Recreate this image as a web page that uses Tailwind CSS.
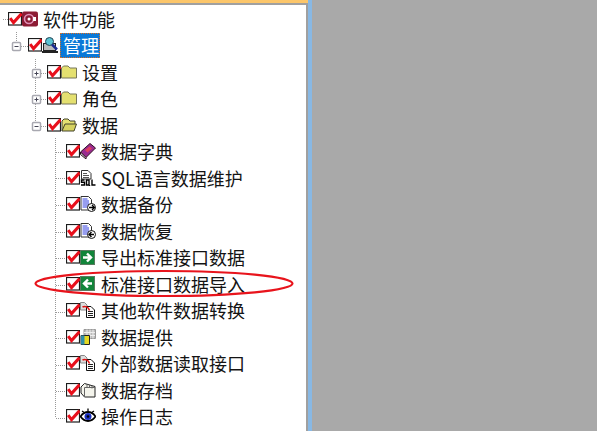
<!DOCTYPE html>
<html lang="zh">
<head>
  <meta charset="UTF-8" />
  <title>软件功能</title>
  <script src="https://cdn.jsdelivr.net/npm/@tailwindcss/browser@4"></script>
</head>
<body class="w-[601px] h-[431px] overflow-hidden bg-[#a9a9a9]">
  <svg class="hidden">
    <symbol id="chk" viewBox="0 0 14 14">
      <rect x="0.5" y="0.5" width="13" height="12.5" fill="#fff" stroke="#1c1c1c" stroke-width="1.2"/>
      <path d="M2.2 6.2 L5.5 10.6 L13.6 1.6" fill="none" stroke="#e8101c" stroke-width="3"/>
    </symbol>
    <symbol id="folder" viewBox="0 0 16 14">
      <path d="M0.5 13V3L2.5 1H7L9 3H15.5V13z" fill="#e4e070" stroke="#77775a"/>
    </symbol>
    <symbol id="doc-arrow" viewBox="0 0 16 16">
      <path d="M1 0.5h7.500l3 3V14H1z" fill="#fff" stroke="#333"/>
      <path d="M2.500 3h5M2.500 5h6.500M2.500 7h6.500M2.500 9h6.500M2.500 11h5" stroke="#2f3ce0"/>
      <circle cx="11.500" cy="11.500" r="4" fill="#fff" stroke="#111"/>
    </symbol>
    <symbol id="doc-red" viewBox="0 0 16 16">
      <path d="M0.500 0.500h4l2.500 2.500v5H0.500z" fill="#ddd" stroke="#888"/>
      <path d="M6.500 4.500h4.500l3.500 3.500v7.500h-8z" fill="#fff" stroke="#111"/>
      <path d="M8 9.500h5M8 11.500h5M8 13.500h5" stroke="#222"/>
      <path d="M2.500 5c2.500-1.500 6 0 7 3.500" fill="none" stroke="#e01010" stroke-width="1.500"/>
    </symbol>
  </svg>

  <div class="relative w-full h-full flex" style="font-family:'Noto Sans CJK SC','Liberation Sans',sans-serif">
    <div class="w-[312px] h-full shrink-0 flex flex-col border-r-4 border-[#88b8e4]">
      <div class="h-[3px] bg-[#fcc66a] shrink-0"></div>
      <div class="flex-1 bg-white border-t-2 border-r-2 border-[#a0a0a0] pt-[0.5px] text-[18px] leading-[26.5px] text-[#141414]">

        <div class="h-[26.5px] flex items-center pl-[8px]">
          <svg class="w-[14px] h-[14px]"><use href="#chk"/></svg>
          <svg class="w-[16px] h-[16px]" viewBox="0 0 16 16"><rect x="0" y="0.5" width="16" height="15" rx="2" fill="#8c1c34"/><circle cx="7" cy="8" r="4.500" fill="none" stroke="#e090b8" stroke-width="1.600"/><circle cx="7" cy="8" r="1.500" fill="#fff"/><rect x="11" y="6" width="3" height="4" fill="#fff"/></svg>
          <span class="ml-[5px]">软件功能</span>
        </div>

        <div class="h-[26.5px] flex items-center pl-[28px]">
          <svg class="w-[14px] h-[14px]"><use href="#chk"/></svg>
          <svg class="w-[16px] h-[16px]" viewBox="0 0 16 16"><rect x="1.500" y="6.500" width="12" height="7" fill="#bbb" stroke="#222"/><path d="M0 15h16" stroke="#222" stroke-width="2"/><circle cx="7.500" cy="4.500" r="4" fill="#5cc4d4" stroke="#245"/><path d="M10 7.500l5 5" stroke="#1a2a90" stroke-width="2.500"/></svg>
          <span class="ml-[2px] px-[2px] h-[25px] w-[40px] bg-[#0a78d7] text-white border border-dotted border-[#e07020] leading-[23px] whitespace-nowrap">管理</span>
        </div>

        <div class="h-[26.5px] flex items-center pl-[47px]">
          <svg class="w-[14px] h-[14px]"><use href="#chk"/></svg>
          <svg class="w-[16px] h-[14px]"><use href="#folder"/></svg>
          <span class="ml-[5px]">设置</span>
        </div>
        <div class="h-[26.5px] flex items-center pl-[47px]">
          <svg class="w-[14px] h-[14px]"><use href="#chk"/></svg>
          <svg class="w-[16px] h-[14px]"><use href="#folder"/></svg>
          <span class="ml-[5px]">角色</span>
        </div>
        <div class="h-[26.5px] flex items-center pl-[47px]">
          <svg class="w-[14px] h-[14px]"><use href="#chk"/></svg>
          <svg class="w-[16px] h-[14px]" viewBox="0 0 16 14"><path d="M1 13V3L3 1H7L9 3H14V6" fill="#e4e070" stroke="#44442c"/><path d="M1 13 4 6H15.500L13 13z" fill="#d6d260" stroke="#44442c"/></svg>
          <span class="ml-[5px]">数据</span>
        </div>

        <div class="h-[26.5px] flex items-center pl-[66px]">
          <svg class="w-[14px] h-[14px]"><use href="#chk"/></svg>
          <svg class="w-[16px] h-[16px]" viewBox="0 0 16 16"><path d="M0.500 9 10 0.500l5.500 4.500-9.500 9.500z" fill="#9a2c90" stroke="#301020"/><path d="M0.500 9 6 14.500V16L0.500 11.500z" fill="#ddd" stroke="#301020"/><path d="M5 7l4.500-3.500 2.500 2-4.500 4z" fill="#e04060"/></svg>
          <span class="ml-[5px]">数据字典</span>
        </div>
        <div class="h-[26.5px] flex items-center pl-[66px]">
          <svg class="w-[14px] h-[14px]"><use href="#chk"/></svg>
          <svg class="w-[16px] h-[16px]" viewBox="0 0 16 16"><path d="M1.500 0.500h6.500l3 3V9h-9.500z" fill="#fff" stroke="#333"/><path d="M3 3.500h4M3 5.500h6M3 7.500h6" stroke="#555"/><path d="M4.500 10H1.500v2.300h3V15H1M6.500 10h2.500v5H6.500zM9 15l1 1M12 9.500V15h3.500" fill="none" stroke="#000" stroke-width="1.400"/></svg>
          <span class="ml-[5px]">SQL语言数据维护</span>
        </div>
        <div class="h-[26.5px] flex items-center pl-[66px]">
          <svg class="w-[14px] h-[14px]"><use href="#chk"/></svg>
          <svg class="w-[16px] h-[16px]" viewBox="0 0 16 16"><use href="#doc-arrow"/><path d="M9 11.500h5M12 9l2.500 2.500L12 14" fill="none" stroke="#000" stroke-width="1.300"/></svg>
          <span class="ml-[5px]">数据备份</span>
        </div>
        <div class="h-[26.5px] flex items-center pl-[66px]">
          <svg class="w-[14px] h-[14px]"><use href="#chk"/></svg>
          <svg class="w-[16px] h-[16px]" viewBox="0 0 16 16"><use href="#doc-arrow"/><path d="M9 11.500h5M11.500 9 9 11.500 11.500 14" fill="none" stroke="#000" stroke-width="1.300"/></svg>
          <span class="ml-[5px]">数据恢复</span>
        </div>
        <div class="h-[26.5px] flex items-center pl-[66px]">
          <svg class="w-[14px] h-[14px]"><use href="#chk"/></svg>
          <svg class="w-[15px] h-[15px] mr-[1px]" viewBox="0 0 15 15"><rect width="14" height="14" x="0.500" y="0.500" fill="#12853a" stroke="#5a7a60"/><path d="M3 7.500h7M7 3.500l4 4-4 4" fill="none" stroke="#fff" stroke-width="2.400"/></svg>
          <span class="ml-[5px]">导出标准接口数据</span>
        </div>
        <div class="h-[26.5px] flex items-center pl-[66px]">
          <svg class="w-[14px] h-[14px]"><use href="#chk"/></svg>
          <svg class="w-[15px] h-[15px] mr-[1px]" viewBox="0 0 15 15"><rect width="14" height="14" x="0.500" y="0.500" fill="#12853a" stroke="#5a7a60"/><path d="M12 7.500H5M8 3.500l-4 4 4 4" fill="none" stroke="#fff" stroke-width="2.400"/></svg>
          <span class="ml-[5px]">标准接口数据导入</span>
        </div>
        <div class="h-[26.5px] flex items-center pl-[66px]">
          <svg class="w-[14px] h-[14px]"><use href="#chk"/></svg>
          <svg class="w-[16px] h-[16px]"><use href="#doc-red"/></svg>
          <span class="ml-[5px]">其他软件数据转换</span>
        </div>
        <div class="h-[26.5px] flex items-center pl-[66px]">
          <svg class="w-[14px] h-[14px]"><use href="#chk"/></svg>
          <svg class="w-[16px] h-[16px]" viewBox="0 0 16 16"><path d="M4 0.500h11.500v9H4z" fill="#bbb" stroke="#999"/><path d="M7 0.500v9M10 0.500v9M13 0.500v9M4 3.500h11M4 6.500h11" stroke="#eee"/><path d="M1 6.500h8.500v9H1z" fill="#e6d820" stroke="#222"/><path d="M1 6.500h3.500v9H1z" fill="#2f8ea8"/></svg>
          <span class="ml-[5px]">数据提供</span>
        </div>
        <div class="h-[26.5px] flex items-center pl-[66px]">
          <svg class="w-[14px] h-[14px]"><use href="#chk"/></svg>
          <svg class="w-[16px] h-[16px]"><use href="#doc-red"/></svg>
          <span class="ml-[5px]">外部数据读取接口</span>
        </div>
        <div class="h-[26.5px] flex items-center pl-[66px]">
          <svg class="w-[14px] h-[14px]"><use href="#chk"/></svg>
          <svg class="w-[16px] h-[16px]" viewBox="0 0 16 16"><path d="M1 5 4.500 1.500l10.500 3V15H4.500L1 11z" fill="#f4f4ec" stroke="#222"/><path d="M4.500 5.500V15M4.500 5.500H15M7 2.500v3M9.500 3v3M12 3.500v3" stroke="#666"/></svg>
          <span class="ml-[5px]">数据存档</span>
        </div>
        <div class="h-[26.5px] flex items-center pl-[66px]">
          <svg class="w-[14px] h-[14px]"><use href="#chk"/></svg>
          <svg class="w-[16px] h-[16px]" viewBox="0 0 16 16"><path d="M0.500 8.500c4-6 11-6 15 0-4 6-11 6-15 0z" fill="#fff" stroke="#000" stroke-width="1.800"/><circle cx="8" cy="8.500" r="3.500" fill="#1a30c0"/><circle cx="8" cy="8.500" r="1.300" fill="#000"/><path d="M2 3l3 2M8 0.500v2.500M14 3l-3 2" stroke="#000" stroke-width="1.300"/></svg>
          <span class="ml-[5px]">操作日志</span>
        </div>
      </div>
    </div>
    <div class="flex-1 bg-[#a9a9a9]"></div>
    <div class="w-[4px] bg-white shrink-0"></div>

    <!-- tree connectors, ellipse drawn over the list -->
    <svg class="absolute inset-0 pointer-events-none" width="601" height="431" viewBox="0 0 601 431">
      <g stroke="#999" stroke-dasharray="1 1" fill="none">
        <path d="M3 19.5H8M16.5 32V41M21 46.5H28M35.5 59V68M35.5 78V94M35.5 104V121M41 73.5H47M41 99.5H47M41 126.5H47M55.5 138V418M56 152.5H66M56 178.5H66M56 205.5H66M56 232.5H66M56 258.5H66M56 285.5H66M56 312.5H66M56 338.5H66M56 365.5H66M56 391.5H66M56 418.5H66"/>
      </g>
      <g fill="#fff" stroke="#a8a8b0" stroke-width="1.5">
        <rect x="12.5" y="42.5" width="8" height="8" rx="1"/>
        <rect x="32.5" y="69.5" width="8" height="8" rx="1"/>
        <rect x="32.5" y="95.5" width="8" height="8" rx="1"/>
        <rect x="32.5" y="122.5" width="8" height="8" rx="1"/>
      </g>
      <path d="M14.5 46.5h4M34.5 73.5h4M36.5 71.5v4M34.5 99.5h4M36.5 97.5v4M34.5 126.5h4" stroke="#445"/>
      <ellipse cx="164" cy="283.5" rx="128.5" ry="12.5" fill="none" stroke="#e8141c" stroke-width="2.200"/>
    </svg>
  </div>
</body>
</html>
